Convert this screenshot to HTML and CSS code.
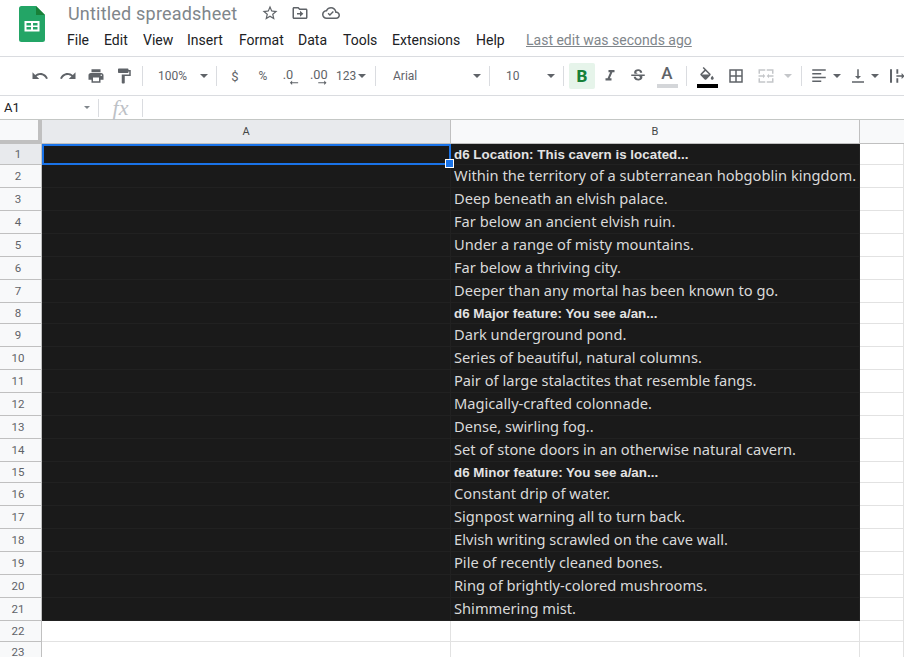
FILE: index.html
```html
<!DOCTYPE html>
<html lang="en">
<head>
<meta charset="utf-8">
<title>Untitled spreadsheet</title>
<link rel="stylesheet" href="styles.css">
</head>
<body>
<header class="titlebar">
  <svg class="logo" viewBox="0 0 26 36" width="26" height="36"><path fill="#23a566" d="M2.500 0H17l9 9v24.500a2.500 2.500 0 0 1-2.500 2.500h-21A2.500 2.500 0 0 1 0 33.500v-31A2.500 2.500 0 0 1 2.500 0z"/><path fill="#188038" d="M17 0l9 9h-9z"/><path fill="#fff" fill-rule="evenodd" d="M5.500 15h15v10.500h-15zm2 2v2.500h4.500V17zm6.500 0v2.500h4.500V17zM7.500 21v2.500h4.500V21zm6.500 0v2.500h4.500V21z"/></svg>
  <div class="title-main">
    <div class="title-row">
      <span class="doc-name">Untitled spreadsheet</span>
      <svg class="ti star" viewBox="0 0 24 24"><path d="M22 9.240l-7.190-.620L12 2 9.190 8.630 2 9.240l5.460 4.730L5.820 21 12 17.270 18.180 21l-1.630-7.030L22 9.240zM12 15.400l-3.760 2.270 1-4.280-3.320-2.880 4.380-.380L12 6.100l1.710 4.040 4.380.380-3.320 2.880 1 4.280L12 15.400z"/></svg>
      <svg class="ti folder" viewBox="0 0 24 24"><path d="M20 6h-8l-2-2H4c-1.100 0-2 .9-2 2v12c0 1.100.9 2 2 2h16c1.100 0 2-.9 2-2V8c0-1.100-.9-2-2-2zm0 12H4V6h5.170l2 2H20v10z"/><path d="M12 17l4.500-4L12 9v3H8v2h4z"/></svg>
      <svg class="ti cloud" viewBox="0 0 24 24"><path d="M19.350 10.040C18.670 6.590 15.640 4 12 4 9.110 4 6.600 5.640 5.350 8.040 2.340 8.360 0 10.910 0 14c0 3.310 2.690 6 6 6h13c2.760 0 5-2.240 5-5 0-2.640-2.050-4.780-4.650-4.960zM19 18H6c-2.210 0-4-1.790-4-4 0-2.050 1.530-3.760 3.560-3.970l1.070-.11.500-.95C8.080 7.140 9.940 6 12 6c2.620 0 4.880 1.860 5.390 4.430l.3 1.500 1.530.11c1.560.1 2.780 1.410 2.780 2.960 0 1.650-1.350 3-3 3z"/><path d="M10.500 16l-3-3 1.300-1.300 1.700 1.700 4-4 1.300 1.300z"/></svg>
    </div>
    <nav class="menu">
      <span class="m m-file">File</span><span class="m m-edit">Edit</span><span class="m m-view">View</span><span class="m m-insert">Insert</span><span class="m m-format">Format</span><span class="m m-data">Data</span><span class="m m-tools">Tools</span><span class="m m-ext">Extensions</span><span class="m m-help">Help</span><span class="last-edit">Last edit was seconds ago</span>
    </nav>
  </div>
</header>

<div class="toolbar">
  <span class="tb"><svg class="ic" viewBox="0 0 24 24"><path d="M12.500 8c-2.650 0-5.050.99-6.900 2.600L2 7v9h9l-3.620-3.620c1.390-1.160 3.160-1.880 5.120-1.880 3.540 0 6.550 2.310 7.600 5.500l2.370-.78C21.080 11.030 17.150 8 12.500 8z"/></svg></span>
  <span class="tb"><svg class="ic" viewBox="0 0 24 24"><path d="M18.400 10.600C16.550 8.990 14.150 8 11.500 8c-4.650 0-8.580 3.030-9.960 7.220L3.900 16c1.050-3.190 4.050-5.500 7.600-5.500 1.950 0 3.730.72 5.120 1.880L13 16h9V7l-3.600 3.600z"/></svg></span>
  <span class="tb"><svg class="ic" viewBox="0 0 24 24"><path d="M19 8H5c-1.660 0-3 1.340-3 3v6h4v4h12v-4h4v-6c0-1.660-1.340-3-3-3zm-3 11H8v-5h8v5zm3-7c-.55 0-1-.45-1-1s.45-1 1-1 1 .45 1 1-.45 1-1 1zm-1-9H6v4h12V3z"/></svg></span>
  <span class="tb"><svg class="ic" viewBox="0 0 24 24"><path d="M18 4V3c0-.55-.45-1-1-1H5c-.55 0-1 .45-1 1v4c0 .55.45 1 1 1h12c.55 0 1-.45 1-1V6h1v4H9v11c0 .55.45 1 1 1h2c.55 0 1-.45 1-1v-9h8V4h-3z"/></svg></span>
  <i class="sep sep-a"></i>
  <span class="drop d-zoom"><span class="dl">100%</span><b class="caret"></b></span>
  <i class="sep sep-z"></i>
  <span class="tb t">$</span>
  <span class="tb t pct">%</span>
  <span class="tb"><svg class="ic dec-ic" viewBox="0 0 24 24"><text x="1" y="16" class="dec">.0</text><path d="M21.500 20.200H13.500V18l-3 3 3 3v-2.200h8z"/></svg></span>
  <span class="tb"><svg class="ic dec-ic" viewBox="0 0 24 24"><text x="0" y="16" class="dec">.00</text><path d="M11 20.200h8V18l3 3-3 3v-2.200h-8z"/></svg></span>
  <span class="drop d-num"><span class="dl">123</span><b class="caret"></b></span>
  <i class="sep"></i>
  <span class="drop d-font"><span class="dl">Arial</span><b class="caret"></b></span>
  <i class="sep"></i>
  <span class="drop d-size"><span class="dl">10</span><b class="caret"></b></span>
  <i class="sep"></i>
  <span class="bold-btn">B</span>
  <span class="tb"><svg class="ic" viewBox="0 0 24 24"><path d="M10 4v3h2.210l-3.420 8H6v3h8v-3h-2.210l3.420-8H18V4z"/></svg></span>
  <span class="tb"><svg class="ic" viewBox="0 0 24 24"><path d="M6.850 7.080C6.850 4.370 9.450 3 12.240 3c1.640 0 3 .49 3.900 1.280.77.65 1.460 1.730 1.460 3.240h-3.010c0-.31-.05-.59-.15-.85-.29-.86-1.200-1.280-2.250-1.280-1.860 0-2.340 1.020-2.340 1.700 0 .48.25.88.74 1.210.38.25.77.48 1.410.7H7.390c-.21-.34-.54-.89-.54-1.920zM21 12v-2H3v2h9.620c1.150.45 1.960.75 1.960 1.970 0 1-.81 1.670-2.280 1.670-1.540 0-2.930-.54-2.930-2.510H6.400c0 .55.08 1.130.24 1.580.81 2.290 3.320 3.300 5.670 3.300 2.350 0 5.530-.92 5.530-4.580 0-.44-.07-.87-.24-1.430H21z"/></svg></span>
  <span class="tb color-a"><span class="a-letter">A</span><i class="swatch swatch-grey"></i></span>
  <i class="sep"></i>
  <span class="tb color-f"><svg class="ic fill-ic" viewBox="0 0 24 24"><path d="M16.560 8.940L7.620 0 6.210 1.410l2.380 2.380-5.150 5.150c-.59.59-.59 1.540 0 2.120l5.500 5.500c.29.290.68.440 1.060.44s.77-.15 1.060-.44l5.500-5.500c.59-.58.59-1.530 0-2.120zM5.210 10L10 5.210 14.790 10H5.210zM19 11.500s-2 2.170-2 3.500c0 1.100.9 2 2 2s2-.9 2-2c0-1.330-2-3.500-2-3.500z"/></svg><i class="swatch swatch-black"></i></span>
  <span class="tb borders"><svg class="ic" viewBox="0 0 24 24"><path d="M3 3v18h18V3H3zm8 16H5v-6h6v6zm0-8H5V5h6v6zm8 8h-6v-6h6v6zm0-8h-6V5h6v6z"/></svg></span>
  <span class="tb merge"><svg class="ic off" viewBox="0 0 24 24"><path d="M2 3h9v2H4v4H2zM13 3h9v6h-2V5h-7zM2 15h2v4h7v2H2zM20 15h2v6h-9v-2h7zM2 11h6V9l3 3-3 3v-2H2zM22 13h-6v2l-3-3 3-3v2h6z"/></svg></span>
  <b class="caret caret-off"></b>
  <i class="sep sep-b"></i>
  <span class="tb narrow"><svg class="ic" viewBox="0 0 24 24"><path d="M3 3h18v2H3zM3 8h12v2H3zM3 13h18v2H3zM3 18h12v2H3z"/></svg></span>
  <b class="caret caret-c"></b>
  <span class="tb narrow-v"><svg class="ic" viewBox="0 0 24 24"><path d="M4 19h16v2H4zM13 3v9h3l-4 4-4-4h3V3z"/></svg></span>
  <b class="caret caret-d"></b>
  <span class="tb narrow-w"><svg class="ic" viewBox="0 0 24 24"><path d="M4 3h2.700v18H4zM12.500 3h2.500v6h-2.500zM12.500 15h2.500v6h-2.500zM12.500 11h7V8l4 4-4 4v-3h-7z"/></svg></span>
</div>

<div class="formula">
  <span class="namebox">A1</span><b class="caret caret-small"></b>
  <i class="fsep"></i>
  <span class="fx">fx</span>
  <i class="fsep"></i>
</div>

<main class="sheet">
  <div class="corner"></div><div class="ch ch-sel">A</div><div class="ch">B</div><div class="ch ch-end"></div>

  <div class="rh rh-sel s">1</div><div class="c d s a1"><span class="sel"><i class="handle"></i></span></div><div class="c d s h">d6 Location: This cavern is located...</div><div class="c e s"></div>
  <div class="rh">2</div><div class="c d"></div><div class="c d">Within the territory of a subterranean hobgoblin kingdom.</div><div class="c e"></div>
  <div class="rh">3</div><div class="c d"></div><div class="c d">Deep beneath an elvish palace.</div><div class="c e"></div>
  <div class="rh">4</div><div class="c d"></div><div class="c d">Far below an ancient elvish ruin.</div><div class="c e"></div>
  <div class="rh">5</div><div class="c d"></div><div class="c d">Under a range of misty mountains.</div><div class="c e"></div>
  <div class="rh">6</div><div class="c d"></div><div class="c d">Far below a thriving city.</div><div class="c e"></div>
  <div class="rh">7</div><div class="c d"></div><div class="c d">Deeper than any mortal has been known to go.</div><div class="c e"></div>
  <div class="rh s">8</div><div class="c d s"></div><div class="c d s h">d6 Major feature: You see a/an...</div><div class="c e s"></div>
  <div class="rh">9</div><div class="c d"></div><div class="c d">Dark underground pond.</div><div class="c e"></div>
  <div class="rh">10</div><div class="c d"></div><div class="c d">Series of beautiful, natural columns.</div><div class="c e"></div>
  <div class="rh">11</div><div class="c d"></div><div class="c d">Pair of large stalactites that resemble fangs.</div><div class="c e"></div>
  <div class="rh">12</div><div class="c d"></div><div class="c d">Magically-crafted colonnade.</div><div class="c e"></div>
  <div class="rh">13</div><div class="c d"></div><div class="c d">Dense, swirling fog..</div><div class="c e"></div>
  <div class="rh">14</div><div class="c d"></div><div class="c d">Set of stone doors in an otherwise natural cavern.</div><div class="c e"></div>
  <div class="rh s">15</div><div class="c d s"></div><div class="c d s h">d6 Minor feature: You see a/an...</div><div class="c e s"></div>
  <div class="rh">16</div><div class="c d"></div><div class="c d">Constant drip of water.</div><div class="c e"></div>
  <div class="rh">17</div><div class="c d"></div><div class="c d">Signpost warning all to turn back.</div><div class="c e"></div>
  <div class="rh">18</div><div class="c d"></div><div class="c d">Elvish writing scrawled on the cave wall.</div><div class="c e"></div>
  <div class="rh">19</div><div class="c d"></div><div class="c d">Pile of recently cleaned bones.</div><div class="c e"></div>
  <div class="rh">20</div><div class="c d"></div><div class="c d">Ring of brightly-colored mushrooms.</div><div class="c e"></div>
  <div class="rh">21</div><div class="c d"></div><div class="c d">Shimmering mist.</div><div class="c e"></div>
  <div class="rh s">22</div><div class="c e s"></div><div class="c e s"></div><div class="c e s"></div>
  <div class="rh s">23</div><div class="c e s"></div><div class="c e s"></div><div class="c e s"></div>
</main>
</body>
</html>
```
FILE: styles.css
```css
* { box-sizing: border-box; }
html, body { margin: 0; padding: 0; height: 100%; overflow: hidden; background: #fff; }
body { font-family: Roboto, "Liberation Sans", sans-serif; color: #3c4043; width: 904px; height: 657px; }

/* title bar */
.titlebar { height: 57px; display: flex; border-bottom: 1px solid #dadce0; }
.logo { margin: 6px 0 0 19px; flex: none; }
.title-main { margin-left: 23px; flex: 1; }
.title-row { display: flex; align-items: center; height: 26px; }
.doc-name { font-size: 18px; color: #80868b; width: 193px; white-space: nowrap; letter-spacing: .2px; }
.ti { width: 18px; height: 18px; fill: #5f6368; flex: none; }
.folder { margin-left: 12px; }
.cloud { margin-left: 13px; }
.menu { display: flex; align-items: center; height: 24px; margin: 2px 0 0 -1px; font-size: 14px; color: #202124; white-space: nowrap; }
.menu .m { display: block; }
.m-file { width: 37px; } .m-edit { width: 39px; } .m-view { width: 44px; } .m-insert { width: 52px; }
.m-format { width: 59px; } .m-data { width: 45px; } .m-tools { width: 49px; } .m-ext { width: 84px; } .m-help { width: 50px; }
.last-edit { color: #80868b; text-decoration: underline; font-size: 14px; }

/* toolbar */
.toolbar { height: 39px; display: flex; align-items: center; padding-left: 26px; border-bottom: 1px solid #dadce0; overflow: hidden; white-space: nowrap; }
.tb { width: 28px; height: 26px; flex: none; display: flex; align-items: center; justify-content: center; font-size: 12px; color: #5f6368; }
.ic { width: 18px; height: 18px; fill: #5f6368; display: block; flex: none; }
.dec-ic { overflow: visible; }
.dec { font-size: 17px; font-family: Roboto, sans-serif; fill: #5f6368; }
.t { font-size: 13px; }
.pct { font-size: 12px; }
.sep { width: 1px; height: 20px; background: #dadce0; flex: none; }
.sep-a { margin: 0 4px; }
.sep-z { margin-right: 4px; }
.drop { display: flex; align-items: center; flex: none; font-size: 12px; color: #5f6368; }
.caret { display: block; width: 0; height: 0; border-left: 4px solid transparent; border-right: 4px solid transparent; border-top: 4px solid #5f6368; flex: none; }
.d-zoom { width: 69px; padding-left: 11px; }
.d-zoom .dl { width: 42px; }
.d-num { width: 42px; }
.d-num .dl { width: 22px; margin-left: 3px; }
.d-font { width: 113px; padding-left: 17px; }
.d-font .dl { width: 80px; }
.d-size { width: 73px; padding-left: 16px; }
.d-size .dl { width: 41px; }
.bold-btn { width: 26px; height: 26px; margin: 0 1px 0 5px; background: #e6f4ea; border-radius: 2px; color: #188038; font: 800 17px "Roboto", sans-serif; display: flex; align-items: center; justify-content: center; flex: none; }
.color-a { flex-direction: column; justify-content: flex-start; height: 28px; margin: 0 5px 0 1px; }
.a-letter { font-size: 17px; line-height: 22px; color: #5f6368; font-weight: 500; }
.swatch { display: block; width: 21px; height: 4px; flex: none; }
.swatch-grey { background: #d4d6d9; }
.swatch-black { background: #000; margin-top: -1px; }
.color-f { flex-direction: column; height: 28px; justify-content: flex-start; margin-left: 6px; }
.fill-ic { margin-top: 5px; }
.borders { margin-left: 1px; }
.merge { width: 30px; margin-left: 1px; }
.off { fill: #c4c6c9; }
.caret-off { border-top-color: #c4c6c9; margin-left: 3px; }
.sep-b { margin: 0 2px 0 9px; }
.narrow { width: 30px; }
.caret-c { margin-left: -1px; }
.narrow-v { margin-left: 3px; }
.caret-d { margin-left: -1px; }
.narrow-w { margin-left: 3px; }

/* formula bar */
.formula { height: 24px; display: flex; align-items: center; border-bottom: 1px solid #c4c7c5; padding-left: 4px; }
.namebox { font: 13px "Roboto", sans-serif; color: #202124; width: 80px; }
.caret-small { border-width: 3px 3px 0 3px; border-top-color: #80868b; margin-right: 8px; }
.fsep { width: 1px; height: 18px; background: #dadce0; flex: none; }
.fx { width: 43px; text-align: center; font: italic 22px "Liberation Serif", serif; color: #bdc1c6; }

/* grid */
.sheet { display: grid; grid-template-columns: 42px 409px 409px 44px; grid-template-rows: 24px repeat(23, auto); }
.corner { background: #f8f9fa; border-right: 4px solid #c0c0c0; border-bottom: 4px solid #c0c0c0; }
.ch { background: #f8f9fa; border-right: 1px solid #c0c0c0; border-bottom: 1px solid #c0c0c0; font: 11px "Roboto", sans-serif; color: #444746; display: flex; align-items: center; justify-content: center; }
.ch-sel { background: #e8eaed; }
.ch-end { border-right: 0; }
.rh { height: 23px; background: #f8f9fa; border-right: 1px solid #c0c0c0; border-bottom: 1px solid #c0c0c0; font: 11.500px "Roboto", sans-serif; color: #5f6368; display: flex; align-items: center; justify-content: center; padding-right: 5px; }
.rh-sel { background: #e8eaed; }
.rh.s { height: 21px; }
.c { height: 23px; border-right: 1px solid #e2e2e2; border-bottom: 1px solid #e2e2e2; display: flex; align-items: flex-end; padding: 0 0 0 3px; white-space: nowrap; }
.c.s { height: 21px; }
.d { background: #1a1a1a; border-color: #212121; color: #d9d9d9; font: 14.667px/24px "Noto Sans", sans-serif; }
.d.h { font: 700 13.330px/18px "Liberation Sans", sans-serif; letter-spacing: .03px; color: #e3e3e3; }
.e { background: #fff; }
.a1 { position: relative; overflow: visible; }
.sel { position: absolute; left: 0; top: 0; right: -1px; bottom: -1px; border: 2px solid #1a73e8; }
.handle { position: absolute; right: -4px; bottom: -4px; width: 7px; height: 7px; background: #1a73e8; box-shadow: 0 0 0 1px #fff; }
```
